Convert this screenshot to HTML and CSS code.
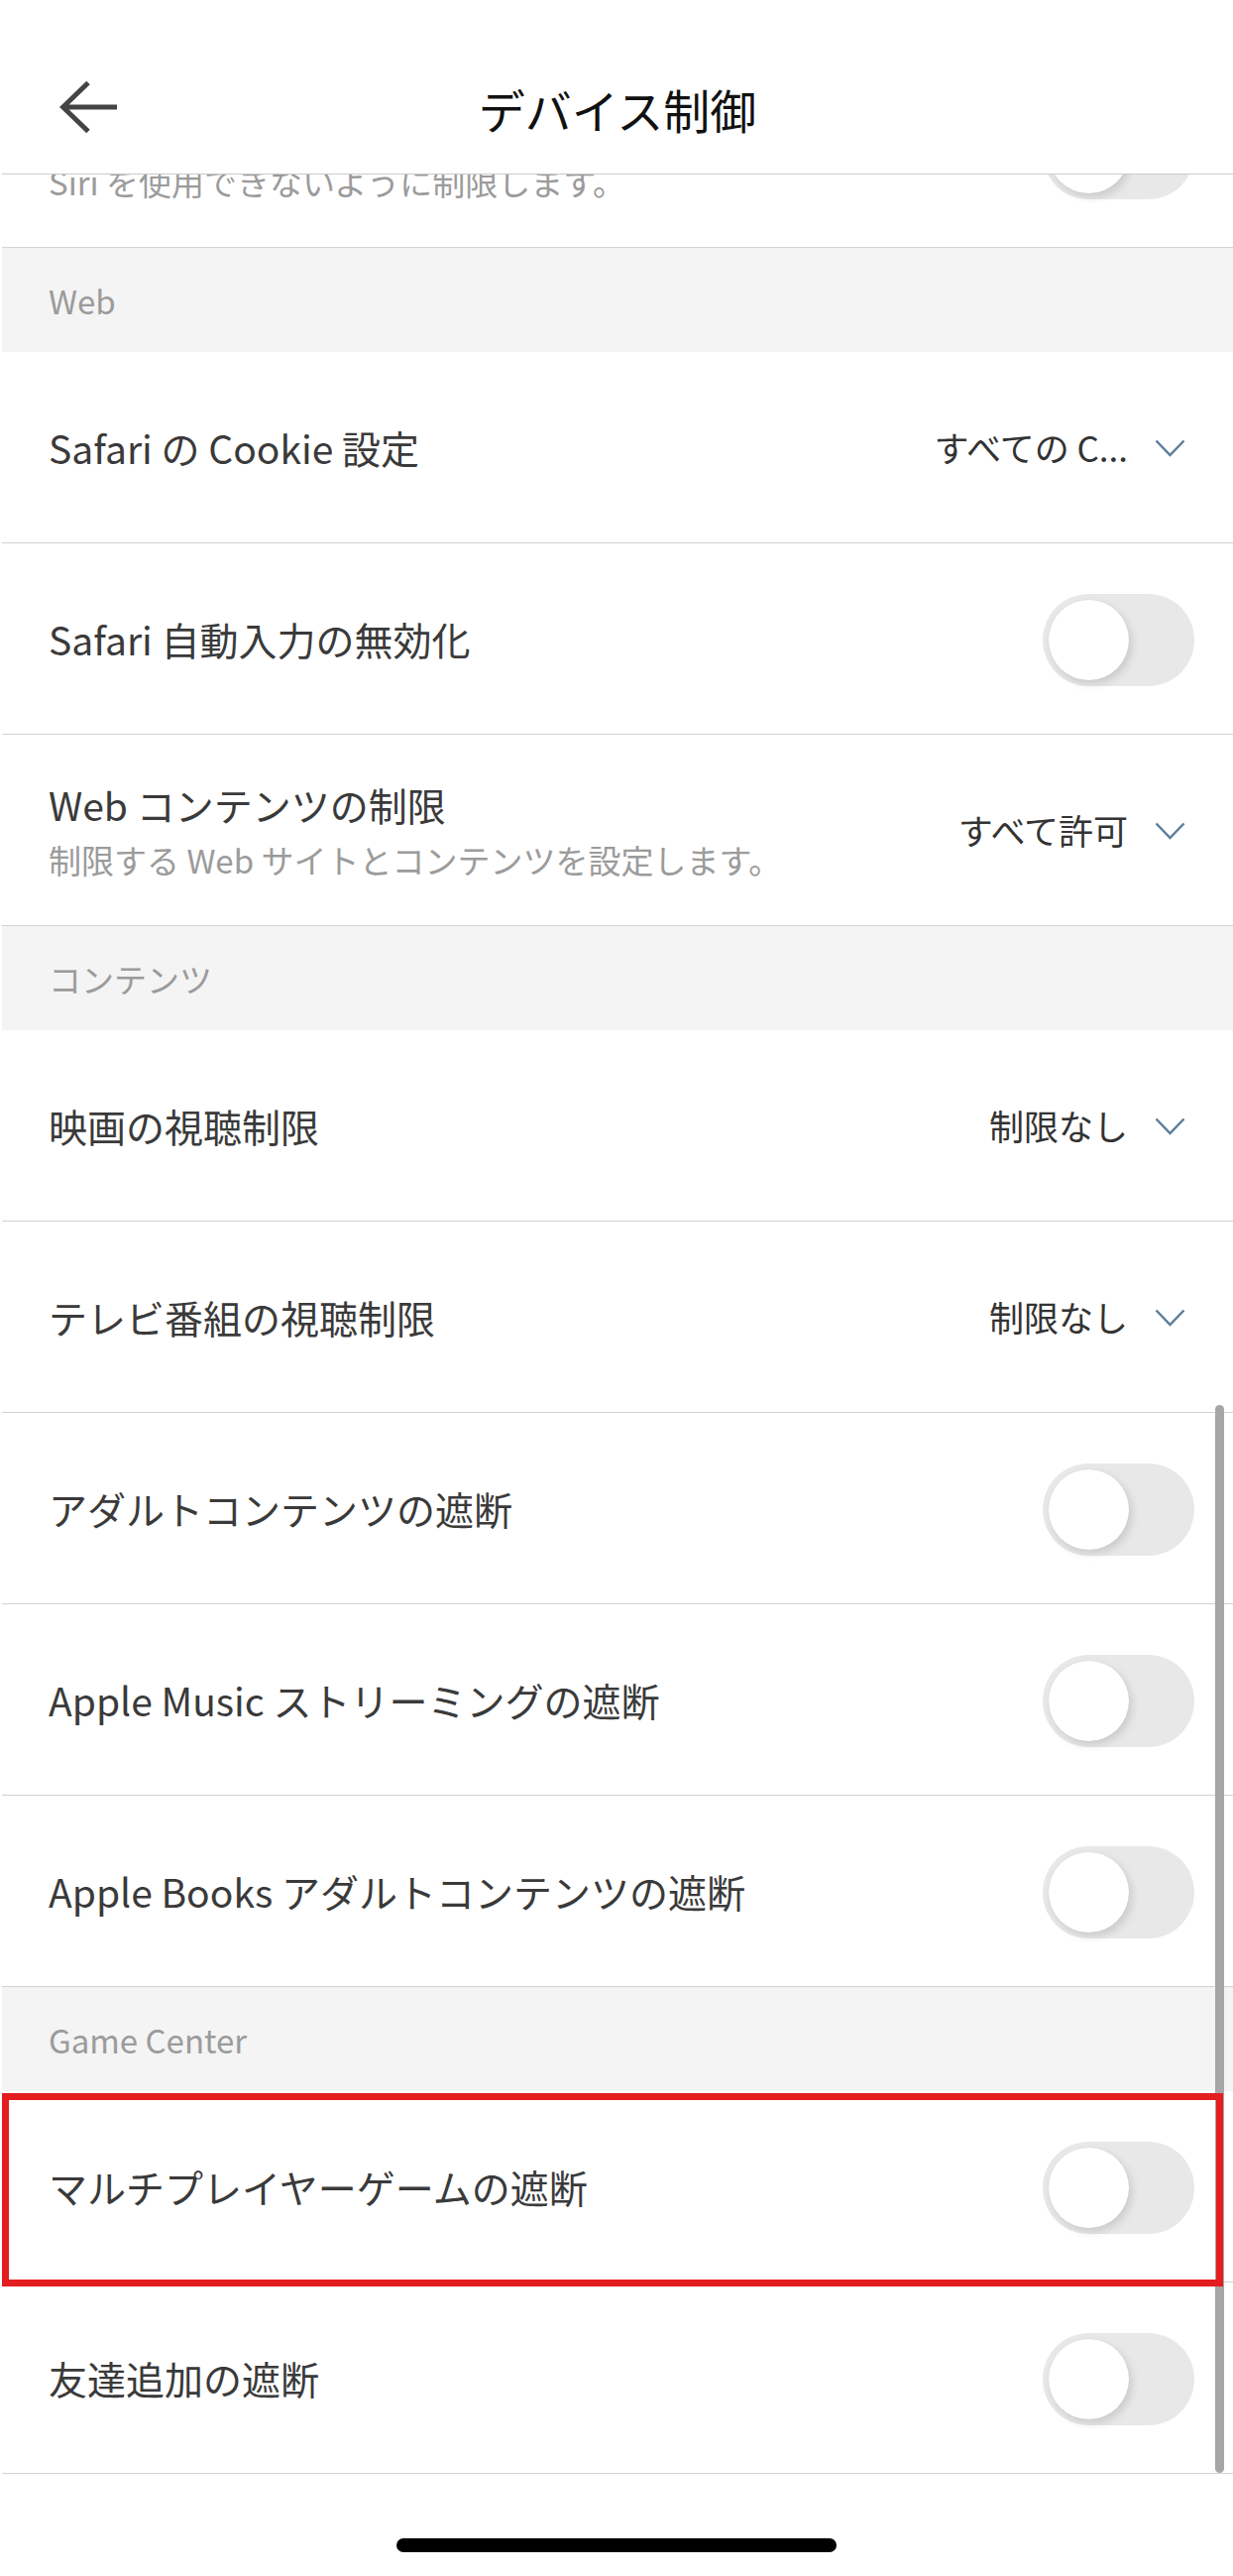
FILE: index.html
```html
<!DOCTYPE html>
<html lang="ja">
<head>
<meta charset="utf-8">
<title>デバイス制御</title>
<link rel="stylesheet" href="styles.css">
</head>
<body>
<div class="screen">
  <header class="topbar">
    <div class="back">
      <svg width="60" height="54" viewBox="0 0 60 54"><path d="M29 2.5 L3.5 27 L29 51.5 M3.5 27 H58" fill="none" stroke="#444" stroke-width="5"/></svg>
    </div>
    <h1 class="title">デバイス制御</h1>
    <div></div>
  </header>

  <div class="list">
    <div class="list-inner">
      <div class="row row-hidden-top">
        <div class="label">
          <div class="sub">Siri を使用できないように制限します。</div>
        </div>
        <div class="toggle"><span class="knob"></span></div>
      </div>

      <div class="section">Web</div>
      <div class="row">
        <div class="label"><div class="name">Safari の Cookie 設定</div></div>
        <div class="value">すべての C...<svg class="chev" width="31" height="18" viewBox="0 0 31 18"><polyline points="1.5,1.5 15.5,16 29.5,1.5" fill="none" stroke="#5b7d9a" stroke-width="2.5"/></svg></div>
      </div>
      <div class="row">
        <div class="label"><div class="name">Safari 自動入力の無効化</div></div>
        <div class="toggle"><span class="knob"></span></div>
      </div>
      <div class="row">
        <div class="label">
          <div class="name">Web コンテンツの制限</div>
          <div class="sub">制限する Web サイトとコンテンツを設定します。</div>
        </div>
        <div class="value">すべて許可<svg class="chev" width="31" height="18" viewBox="0 0 31 18"><polyline points="1.5,1.5 15.5,16 29.5,1.5" fill="none" stroke="#5b7d9a" stroke-width="2.5"/></svg></div>
      </div>

      <div class="section">コンテンツ</div>
      <div class="row">
        <div class="label"><div class="name">映画の視聴制限</div></div>
        <div class="value">制限なし<svg class="chev" width="31" height="18" viewBox="0 0 31 18"><polyline points="1.5,1.5 15.5,16 29.5,1.5" fill="none" stroke="#5b7d9a" stroke-width="2.5"/></svg></div>
      </div>
      <div class="row">
        <div class="label"><div class="name">テレビ番組の視聴制限</div></div>
        <div class="value">制限なし<svg class="chev" width="31" height="18" viewBox="0 0 31 18"><polyline points="1.5,1.5 15.5,16 29.5,1.5" fill="none" stroke="#5b7d9a" stroke-width="2.5"/></svg></div>
      </div>
      <div class="row">
        <div class="label"><div class="name">アダルトコンテンツの遮断</div></div>
        <div class="toggle"><span class="knob"></span></div>
      </div>
      <div class="row">
        <div class="label"><div class="name">Apple Music ストリーミングの遮断</div></div>
        <div class="toggle"><span class="knob"></span></div>
      </div>
      <div class="row">
        <div class="label"><div class="name">Apple Books アダルトコンテンツの遮断</div></div>
        <div class="toggle"><span class="knob"></span></div>
      </div>

      <div class="section">Game Center</div>
      <div class="row highlighted">
        <div class="label"><div class="name">マルチプレイヤーゲームの遮断</div></div>
        <div class="toggle"><span class="knob"></span></div>
        <div class="highlight-box"></div>
      </div>
      <div class="row">
        <div class="label"><div class="name">友達追加の遮断</div></div>
        <div class="toggle"><span class="knob"></span></div>
      </div>
    </div>
  </div>

  <footer class="home">
    <div class="home-bar"></div>
  </footer>

  <div class="scrollbar"></div>
</div>
</body>
</html>
```
FILE: styles.css
```css
* { box-sizing: border-box; }

html, body {
  margin: 0;
  padding: 0;
  background: #fff;
}

body {
  width: 1244px;
  height: 2598px;
  overflow: hidden;
  font-family: "Noto Sans CJK JP", "Noto Sans", sans-serif;
  color: #333;
}

.screen {
  position: relative;
  width: 1244px;
  height: 2598px;
  display: flex;
  flex-direction: column;
}

.topbar {
  height: 176px;
  flex: 0 0 176px;
  padding-top: 45px;
  border-bottom: 1px solid #cbcbcb;
  display: grid;
  grid-template-columns: 1fr auto 1fr;
  align-items: center;
  background: #fff;
  margin-left: 2px;
}

.back {
  padding-left: 58px;
  height: 130px;
  display: flex;
  align-items: center;
  padding-bottom: 4px;
}

.back svg { display: block; }

.title {
  margin: 0;
  font-size: 47px;
  font-weight: 400;
  line-height: 60px;
  color: #111;
  letter-spacing: 0;
}

.list {
  flex: 0 0 auto;
  overflow: hidden;
  padding-left: 2px;
}

.list-inner {
  display: flex;
  flex-direction: column;
}

.row-hidden-top {
  margin-top: -119px;
}

.row-hidden-top .label {
  padding-top: 60px;
}

.row-hidden-top .sub {
  margin-top: 0;
}

.row {
  position: relative;
  height: 193px;
  flex: 0 0 193px;
  border-bottom: 1px solid #d2d2d2;
  display: flex;
  align-items: center;
  justify-content: space-between;
  padding: 0 39px 0 47px;
  background: #fff;
}

.label {
  display: flex;
  flex-direction: column;
}

.name {
  font-size: 39px;
  line-height: 48px;
  color: #3a3a3a;
  white-space: nowrap;
}

.sub {
  font-size: 33px;
  line-height: 40px;
  margin-top: 12px;
  color: #9b9b9b;
  white-space: nowrap;
}

.value {
  display: flex;
  align-items: center;
  font-size: 35px;
  line-height: 44px;
  color: #333;
  padding-right: 9px;
  white-space: nowrap;
}

.chev {
  display: block;
  margin-left: 27px;
  margin-top: 2px;
}

.section {
  height: 105px;
  flex: 0 0 105px;
  background: #f4f4f4;
  display: flex;
  align-items: center;
  padding-left: 47px;
  font-size: 33px;
  line-height: 40px;
  color: #9b9b9b;
}

.toggle {
  width: 153px;
  height: 93px;
  border-radius: 47px;
  background: #e8e8e9;
  padding: 6px;
  flex: 0 0 auto;
  margin-top: 2px;
}

.knob {
  display: block;
  width: 81px;
  height: 81px;
  border-radius: 50%;
  background: #fff;
  box-shadow: 3px 4px 9px rgba(0, 0, 0, 0.13), 0 0 1px rgba(0, 0, 0, 0.08);
}

.highlight-box {
  position: absolute;
  top: 2px;
  left: 0;
  right: 10px;
  bottom: -5px;
  border: 7px solid #e41d20;
  pointer-events: none;
  z-index: 3;
}

.home {
  flex: 1 1 auto;
  display: flex;
  justify-content: center;
  padding-top: 65px;
}

.home-bar {
  width: 444px;
  height: 14px;
  border-radius: 7px;
  background: #000;
}

.scrollbar {
  position: absolute;
  left: 1226px;
  top: 1417px;
  width: 9px;
  height: 1077px;
  border-radius: 5px;
  background: #a6a6a6;
  z-index: 1;
}
```
